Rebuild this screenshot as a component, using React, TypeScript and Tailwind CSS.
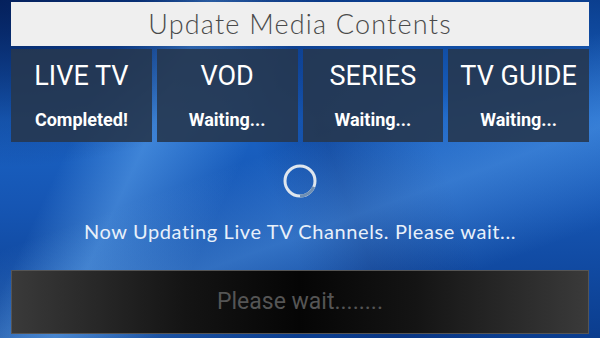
import React from "react";

const tiles = [
  { title: "LIVE TV", status: "Completed!" },
  { title: "VOD", status: "Waiting..." },
  { title: "SERIES", status: "Waiting..." },
  { title: "TV GUIDE", status: "Waiting..." },
];

const Spinner = () => (
  <svg width="36" height="36" viewBox="0 0 36 36">
    <circle cx="18" cy="18" r="15" fill="none" stroke="#dfe6ee" strokeWidth="3" />
    <path d="M31.8 23.9 A15 15 0 0 1 18 33" fill="none" stroke="#6f8fb3" strokeWidth="3" />
  </svg>
);

export default function App() {
  return (
    <div className="relative w-[600px] h-[338px] overflow-hidden bg-[#0f4fa8] font-['Roboto',sans-serif]">
      {/* background streaks */}
      <div className="absolute inset-0 bg-[linear-gradient(180deg,#0b3f8f_0%,#1a63c4_35%,#1656b4_60%,#0b3d8e_100%)]" />
      <div className="absolute inset-0 bg-[linear-gradient(115deg,transparent_0%,transparent_18%,rgba(120,190,255,0.4)_28%,transparent_42%,transparent_100%)]" />
      <div className="absolute inset-0 bg-[linear-gradient(70deg,transparent_45%,rgba(8,40,110,0.35)_55%,transparent_70%)]" />
      <div className="absolute inset-0 bg-[linear-gradient(160deg,transparent_45%,rgba(110,180,250,0.35)_62%,transparent_80%)]" />
      <div className="absolute inset-0 bg-[radial-gradient(ellipse_at_0%_0%,rgba(3,25,80,0.8)_0%,transparent_35%)]" />

      <div className="relative flex flex-col px-[11px] pt-[2px]">
        <div className="h-[44px] bg-[#efefef] flex items-center justify-center">
          <span className="text-[27px] font-light text-[#4a4a4a] font-['Lato',sans-serif] tracking-[1.2px]">
            Update Media Contents
          </span>
        </div>

        <div className="mt-[3px] grid grid-cols-4 gap-[5px]">
          {tiles.map((t) => (
            <div
              key={t.title}
              className="h-[93px] bg-[rgba(38,55,80,0.9)] flex flex-col items-center text-white"
            >
              <div className="mt-[11px] text-[27px] leading-[32px]">{t.title}</div>
              <div className="mt-[17px] text-[18px] font-bold leading-[22px]">{t.status}</div>
            </div>
          ))}
        </div>

        <div className="mt-[21px] flex justify-center">
          <Spinner />
        </div>

        <div className="mt-[20px] text-center text-[20px] text-[#e8f0fa] font-['Lato',sans-serif] leading-[24px] tracking-[0.6px]">
          Now Updating Live TV Channels. Please wait...
        </div>

        <div className="mt-[27px] h-[64px] border border-[#555] bg-[linear-gradient(90deg,#3a3a3a_0%,#141414_30%,#050505_50%,#141414_70%,#3a3a3a_100%)] flex items-center justify-center">
          <span className="text-[23px] text-[#555]">Please wait........</span>
        </div>
      </div>
    </div>
  );
}
